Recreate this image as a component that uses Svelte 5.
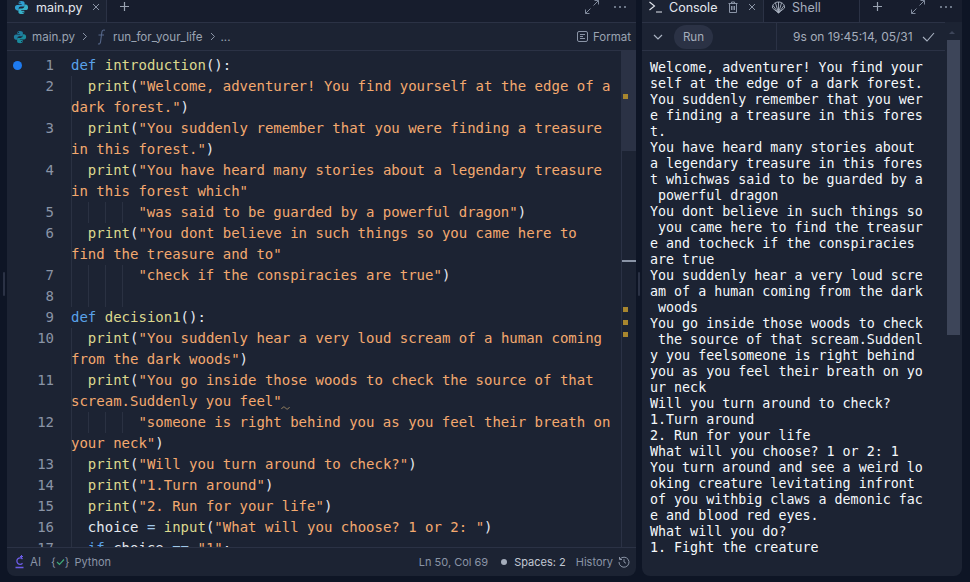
<script>
  const kw = 'k', fn = 'f', str = 's', pl = 'p', op = 'o';

  const P = (text) => [[pl, '  '], [fn, 'print'], [pl, '('], [str, text], [pl, ')']];

  const lines = [
    { n: 1, top: true, parts: [[kw, 'def'], [pl, ' '], [fn, 'introduction'], [pl, '():']] },
    { n: 2, parts: P('"Welcome, adventurer! You find yourself at the edge of a dark forest."') },
    { n: 3, parts: P('"You suddenly remember that you were finding a treasure in this forest."') },
    { n: 4, parts: [[pl, '  '], [fn, 'print'], [pl, '('], [str, '"You have heard many stories about a legendary treasure in this forest which"']] },
    { n: 5, deep: true, parts: [[pl, '        '], [str, '"was said to be guarded by a powerful dragon"'], [pl, ')']] },
    { n: 6, parts: [[pl, '  '], [fn, 'print'], [pl, '('], [str, '"You dont believe in such things so you came here to find the treasure and to"']] },
    { n: 7, deep: true, parts: [[pl, '        '], [str, '"check if the conspiracies are true"'], [pl, ')']] },
    { n: 8, deep: true, parts: [[pl, ' ']] },
    { n: 9, top: true, parts: [[kw, 'def'], [pl, ' '], [fn, 'decision1'], [pl, '():']] },
    { n: 10, parts: P('"You suddenly hear a very loud scream of a human coming from the dark woods"') },
    { n: 11, parts: [[pl, '  '], [fn, 'print'], [pl, '('], [str, '"You go inside those woods to check the source of that scream.Suddenly you feel"']] },
    { n: 12, deep: true, parts: [[pl, '        '], [str, '"someone is right behind you as you feel their breath on your neck"'], [pl, ')']] },
    { n: 13, parts: P('"Will you turn around to check?"') },
    { n: 14, parts: P('"1.Turn around"') },
    { n: 15, parts: P('"2. Run for your life"') },
    { n: 16, parts: [[pl, '  choice '], [op, '='], [pl, ' '], [fn, 'input'], [pl, '('], [str, '"What will you choose? 1 or 2: "'], [pl, ')']] },
    { n: 17, parts: [[pl, '  '], [kw, 'if'], [pl, ' choice '], [op, '=='], [pl, ' '], [str, '"1"'], [pl, ':']] }
  ];

  const output = `Welcome, adventurer! You find yourself at the edge of a dark forest.
You suddenly remember that you were finding a treasure in this forest.
You have heard many stories about a legendary treasure in this forest whichwas said to be guarded by a powerful dragon
You dont believe in such things so you came here to find the treasure and tocheck if the conspiracies are true
You suddenly hear a very loud scream of a human coming from the dark woods
You go inside those woods to check the source of that scream.Suddenly you feelsomeone is right behind you as you feel their breath on your neck
Will you turn around to check?
1.Turn around
2. Run for your life
What will you choose? 1 or 2: 1
You turn around and see a weird looking creature levitating infront of you withbig claws a demonic face and blood red eyes.
What will you do?
1. Fight the creature`;

  // the console breaks at a fixed column, even in the middle of a word
  const COLS = 34;
  const rows = output.split('\n').flatMap((l) => {
    const out = [];
    for (let i = 0; i < l.length; i += COLS) out.push(l.slice(i, i + COLS));
    return out;
  });
</script>

{#snippet python(size, muted)}
  <svg class="py" width={size} height={size} viewBox="0 0 16 16">
    <path fill={muted ? '#1f7d9e' : '#2f9fd0'} d="M7.900 1C5.600 1 5 2 5 3v1.600h3.200v.6H3.400C2 5.200 1 6.300 1 8.100s1 3 2.400 3H5V9.300c0-1.300 1-2.300 2.300-2.300h2.400C10.700 7 11.300 6.300 11.300 5.300V3c0-1.100-1.200-2-3.400-2zM6.300 2.200a.6.6 0 1 1 0 1.300.6.6 0 0 1 0-1.300z" />
    <path fill={muted ? '#1a8a9c' : '#37b0c8'} d="M8.100 15c2.300 0 2.900-1 2.900-2v-1.600H7.800v-.6h4.800c1.400 0 2.400-1.100 2.400-2.900s-1-3-2.400-3H11v1.800c0 1.300-1 2.300-2.300 2.300H6.300C5.300 8.900 4.700 9.700 4.700 10.700V13c0 1.100 1.200 2 3.400 2zM9.700 13.800a.6.6 0 1 1 0-1.300.6.6 0 0 1 0 1.300z" />
  </svg>
{/snippet}

{#snippet expand()}
  <svg class="ic" width="14" height="14" viewBox="0 0 14 14" fill="none" stroke="#7f899b"><path d="M8.500 5.500 13.500.5M9.500.5h4v4M5.500 8.500l-5 5M.5 9.500v4h4" /></svg>
{/snippet}

{#snippet dots()}
  <span class="dots"><i></i><i></i><i></i></span>
{/snippet}

{#snippet close()}
  <svg class="close" width="8" height="8" viewBox="0 0 8 8" fill="none" stroke="#8a94a6"><path d="M1 1l6 6M7 1l-6 6" /></svg>
{/snippet}

<div class="page">
  <div class="handle"><span></span></div>

  <section class="panel editor">
    <div class="tabs">
      <div class="tab active">
        {@render python(15, false)}
        <span class="tab-name">main.py</span>
        {@render close()}
      </div>
      <svg class="plus" width="11" height="11" viewBox="0 0 11 11" fill="none" stroke="#9aa3b2" stroke-width="1.200"><path d="M5.500 1v9M1 5.500h9" /></svg>
      <div class="spacer"></div>
      {@render expand()}
      {@render dots()}
    </div>

    <div class="crumbs">
      {@render python(14, true)}
      <span>main.py</span>
      <svg class="sep" width="6" height="9" viewBox="0 0 6 9" fill="none" stroke="#8a94a6"><path d="M1 1l3.500 3.500L1 8" /></svg>
      <svg class="fn-icon" width="9" height="16" viewBox="0 0 9 16" fill="none" stroke="#56688a" stroke-width="1.100"><path d="M8 1.200C6 .5 5 1.500 4.800 3.500L3.600 12.500C3.400 14.500 2.500 15.300 1 14.800M1.500 6h5.500" /></svg>
      <span>run_for_your_life</span>
      <svg class="sep" width="6" height="9" viewBox="0 0 6 9" fill="none" stroke="#8a94a6"><path d="M1 1l3.500 3.500L1 8" /></svg>
      <span>...</span>
      <div class="spacer"></div>
      <svg width="11" height="11" viewBox="0 0 11 11" fill="none" stroke="#8a94a6"><rect x=".5" y=".5" width="10" height="10" rx="1.500" /><path d="M3 3.500h5M3 5.500h3M3 7.500h5" /></svg>
      <span class="format">Format</span>
    </div>

    <div class="body">
      <div class="code">
        {#each lines as line}
          <div class="line">
            <div class="gutter">
              {#if line.n === 1}<span class="bp"></span>{/if}
              <span class="num">{line.n}</span>
            </div>
            <div class="text" class:top={line.top} class:deep={line.deep}>{#each line.parts as [c, t]}<span class={c}>{t}</span>{/each}</div>
          </div>
        {/each}
      </div>
      <svg class="squiggle" width="9" height="4" viewBox="0 0 9 4" fill="none" stroke="#a08a66"><path d="M.5 3C2 .5 3 .5 4.500 2S7 3.500 8.500 1" /></svg>
      <div class="minimap">
        <div class="thumb"></div>
        <span class="mark m1"></span>
        <span class="bar"></span>
        <span class="mark m2"></span>
        <span class="mark m3"></span>
        <span class="mark m4"></span>
      </div>
    </div>

    <div class="status">
      <svg width="11" height="16" viewBox="0 0 11 16" fill="none" stroke="#6c5ce7" stroke-width="1.300"><path d="M8.500 5a3.200 3.200 0 1 0 0 4.200M1.500 13.500h8" /><path d="M7.500 1v3M6 2.500h3" stroke-width="1" /></svg>
      <span class="ai">AI</span>
      <span class="lsp"><span>{'{'}</span><svg width="9" height="8" viewBox="0 0 9 8" fill="none" stroke="#3fa878" stroke-width="1.200"><path d="M1 4l2.500 2.500L8 1.500" /></svg><span>{'}'}</span></span>
      <span>Python</span>
      <div class="spacer"></div>
      <span>Ln 50, Col 69</span>
      <span class="dot"></span>
      <span class="spaces">Spaces: 2</span>
      <span>History</span>
      <svg width="12" height="12" viewBox="0 0 12 12" fill="none" stroke="#8a94a6"><path d="M2 3.200A5 5 0 1 1 1 6M1.500 1v2.500H4M6 3.200V6l2 1.300" /></svg>
    </div>
  </section>

  <div class="handle"><span></span></div>

  <section class="panel console">
    <div class="tabs">
      <div class="tab active ctab">
        <svg class="prompt" width="13" height="12" viewBox="0 0 13 12" fill="none" stroke="#e4e8ef" stroke-width="1.100"><path d="M.5 1l5 4-5 4M7 11h6" /></svg>
        <span class="tab-name">Console</span>
        <svg class="trash" width="10" height="12" viewBox="0 0 10 12" fill="none" stroke="#8a94a6"><path d="M.5 2.500h9M3.500 2.500V1h3v1.500M1.500 2.500v9h7v-9M3.500 5v4M5 5v4M6.500 5v4" /></svg>
        {@render close()}
      </div>
      <div class="tab shell">
        <svg width="15" height="15" viewBox="0 0 15 15" fill="none" stroke="#aab3c2" stroke-width=".9"><path d="M7.500 13 1.500 8C1 5 3.500 2 7.500 2s6.500 3 6 6zM7.500 2v11M4.500 3 7.500 13M10.500 3 7.500 13M2 5.500 7.500 13M13 5.500 7.500 13" /></svg>
        <span class="shell-name">Shell</span>
      </div>
      <svg class="plus" width="11" height="11" viewBox="0 0 11 11" fill="none" stroke="#9aa3b2" stroke-width="1.200"><path d="M5.500 1v9M1 5.500h9" /></svg>
      <div class="spacer"></div>
      {@render expand()}
      {@render dots()}
    </div>

    <div class="run-row">
      <svg class="chev" width="10" height="6" viewBox="0 0 10 6" fill="none" stroke="#aab3c2" stroke-width="1.200"><path d="M1 1l4 4 4-4" /></svg>
      <span class="run">Run</span>
      <span class="vsep"></span>
      <span class="time">9s on 19:45:14, 05/31</span>
      <svg width="13" height="10" viewBox="0 0 13 10" fill="none" stroke="#aab3c2" stroke-width="1.100"><path d="M1 5l4 4 7-8" /></svg>
    </div>

    <div class="out">
      {#each rows as row}
        <div class="row">{row}</div>
      {/each}
    </div>

    <span class="arrow"></span>
    <div class="scroll"></div>
  </section>
</div>

<style>
  :global(body) {
    margin: 0;
    background: #0e1525;
    overflow: hidden;
  }

  .page {
    width: 970px;
    height: 582px;
    display: flex;
    padding: 0 8px 6px 0;
    box-sizing: border-box;
    background: #0e1525;
    font-family: Inter, "Noto Sans", sans-serif;
    font-size: 12px;
    color: #8a94a6;
  }

  .handle {
    flex: none;
    width: 6px;
    display: flex;
    align-items: center;
    justify-content: center;
    padding-bottom: 8px;
  }

  .handle:first-child {
    width: 7px;
  }

  .handle span {
    width: 2px;
    height: 24px;
    background: #2b3245;
    border-radius: 1px;
  }

  .panel {
    background: #1c2333;
    border-radius: 0 0 8px 8px;
    display: flex;
    flex-direction: column;
    overflow: hidden;
    position: relative;
  }

  .editor {
    width: 629px;
    flex: none;
  }

  .console {
    flex: 1;
    min-width: 0;
  }

  .spacer {
    flex: 1;
  }

  .tabs {
    height: 22px;
    flex: none;
    display: flex;
    align-items: center;
    background: #171d2d;
    padding-right: 10px;
  }

  .tabs > .plus,
  .tabs > :global(.ic),
  .tabs > :global(.dots) {
    margin-bottom: 9px;
  }

  .tabs > .plus {
    margin-left: 12px;
  }

  .tabs > :global(.ic) {
    margin-right: 15px;
  }

  .tab {
    height: 100%;
    display: flex;
    align-items: center;
    box-sizing: border-box;
    padding-bottom: 8px;
  }

  .tab.active {
    background: #1c2333;
    padding-left: 7px;
    padding-right: 6px;
    border-right: 1px solid #2b3245;
    width: 100px;
  }

  .tab.active.ctab {
    width: 122px;
    padding-right: 7px;
  }

  .tab-name {
    color: #e4e8ef;
    font-size: 12.500px;
    margin-left: 7px;
  }

  .tab :global(.close) {
    margin-left: auto;
    flex: none;
  }

  .trash {
    margin-left: 11px;
  }

  .dots {
    display: inline-flex;
    gap: 3px;
  }

  .dots i {
    width: 2px;
    height: 2px;
    background: #8a94a6;
    border-radius: 50%;
  }

  .crumbs {
    height: 29px;
    flex: none;
    display: flex;
    align-items: center;
    gap: 5px;
    padding: 0 5px 0 6px;
    border-bottom: 1px solid #2b3245;
    border-top: 1px solid #2b3245;
    font-size: 11.600px;
    color: #9aa3b2;
    box-sizing: border-box;
  }

  .sep {
    margin: 0 0 0 2px;
  }

  .fn-icon {
    margin: 0 2px 0 4px;
  }

  .format {
    font-size: 11.500px;
  }

  .body {
    flex: 1;
    min-height: 0;
    position: relative;
    overflow: hidden;
    padding-top: 4px;
  }

  .code {
    font-family: "DejaVu Sans Mono", monospace;
    font-size: 14px;
    line-height: 21px;
    color: #e4e8ef;
  }

  .line {
    display: flex;
  }

  .gutter {
    width: 64px;
    flex: none;
    position: relative;
    text-align: right;
    padding-right: 17px;
    box-sizing: border-box;
    color: #8a94a6;
  }

  .bp {
    position: absolute;
    left: 6px;
    top: 6px;
    width: 9px;
    height: 9px;
    border-radius: 50%;
    background: #1e7bf0;
  }

  .text {
    width: 540px;
    white-space: pre-wrap;
    overflow-wrap: anywhere;
    background: linear-gradient(#2a3142, #2a3142) 0 0 / 1px 100% no-repeat;
  }

  .text.top {
    background: none;
  }

  .text.deep {
    background:
      linear-gradient(#2a3142, #2a3142) 0 0 / 1px 100% no-repeat,
      linear-gradient(#2a3142, #2a3142) 17px 0 / 1px 21px no-repeat,
      linear-gradient(#2a3142, #2a3142) 34px 0 / 1px 21px no-repeat,
      linear-gradient(#2a3142, #2a3142) 51px 0 / 1px 21px no-repeat;
  }

  .k { color: #5aa2ea; }
  .f { color: #dcd98e; }
  .s { color: #f4a96f; }
  .p { color: #e4e8ef; }
  .o { color: #9fc7e8; }

  .squiggle {
    position: absolute;
    left: 274px;
    top: 355px;
  }

  .minimap {
    position: absolute;
    right: 0;
    top: 0;
    bottom: 0;
    width: 14px;
    border-left: 1px solid #2b3245;
  }

  .thumb {
    height: 100px;
    background: #2b3245;
  }

  .mark {
    position: absolute;
    left: 1px;
    width: 5px;
    height: 5px;
    background: #a8862e;
  }

  .m1 { top: 43px; }
  .m2 { top: 256px; }
  .m3 { top: 269px; }
  .m4 { top: 281px; }

  .bar {
    position: absolute;
    left: 0;
    right: 0;
    top: 209px;
    height: 2px;
    background: #8a94a6;
  }

  .status {
    height: 29px;
    flex: none;
    border-top: 1px solid #2b3245;
    display: flex;
    align-items: center;
    gap: 5px;
    padding: 0 6px 0 7px;
    font-size: 11px;
    color: #8a94a6;
    box-sizing: border-box;
  }

  .ai {
    font-size: 11.500px;
    margin-right: 5px;
  }

  .lsp {
    display: inline-flex;
    align-items: center;
  }

  .dot {
    width: 6px;
    height: 6px;
    border-radius: 50%;
    background: #a5adbb;
    margin: 0 2px 0 8px;
  }

  .spaces {
    color: #c2c8d4;
    margin-right: 5px;
  }

  .shell {
    width: 96px;
    padding-left: 7px;
    border-right: 1px solid #2b3245;
    background: #151b2b;
  }

  .shell-name {
    font-size: 12.500px;
    color: #a5adbb;
    margin-left: 6px;
  }

  .run-row {
    height: 29px;
    flex: none;
    display: flex;
    align-items: center;
    padding: 0 10px 0 11px;
    margin-right: 17px;
    border-bottom: 1px solid #2b3245;
    border-top: 1px solid #2b3245;
    box-sizing: border-box;
  }

  .chev {
    margin-right: 11px;
  }

  .run {
    background: #2b3245;
    color: #a5adbb;
    height: 24px;
    line-height: 24px;
    width: 39px;
    text-align: center;
    border-radius: 12px;
    font-size: 11.600px;
  }

  .vsep {
    width: 1px;
    align-self: stretch;
    background: #2b3245;
    margin-left: 63px;
    margin-right: 16px;
  }

  .time {
    font-size: 12px;
    color: #a5adbb;
    margin-right: 8px;
    flex: 1;
    white-space: nowrap;
  }

  .out {
    flex: 1;
    min-height: 0;
    overflow: hidden;
    padding: 9px 0 0 8px;
    font-family: "DejaVu Sans Mono", monospace;
    font-size: 13.330px;
    line-height: 16px;
    color: #f5f9fc;
    white-space: pre;
  }

  .arrow {
    position: absolute;
    top: 31px;
    right: 7px;
    border: 3px solid transparent;
    border-top: 0;
    border-bottom: 3px solid #3d4559;
  }

  .scroll {
    position: absolute;
    top: 40px;
    right: 2px;
    width: 13px;
    height: 295px;
    background: #3d4559;
  }
</style>
